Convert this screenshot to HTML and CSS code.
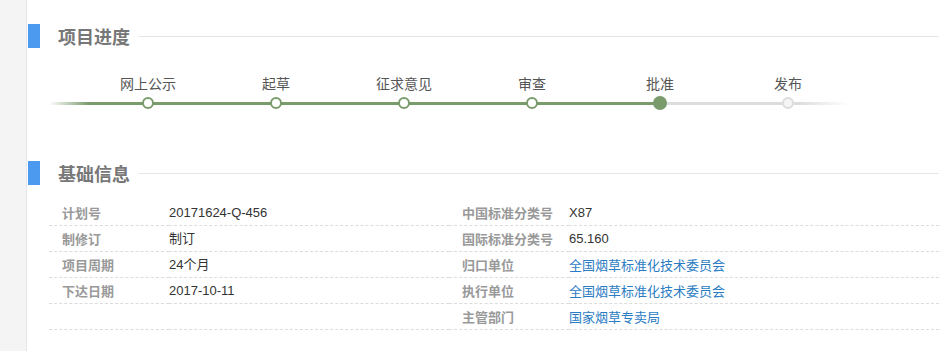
FILE: index.html
```html
<!DOCTYPE html>
<html lang="zh-CN">
  <head>
    <title>项目详情</title>
    <link rel="stylesheet" href="styles.css">
  </head>
  <body>
    <div class="side"></div>
    <div class="main">
      <div class="head">
        <span class="head-bar"></span>
        <h2 class="head-title">项目进度</h2>
        <span class="head-line"></span>
      </div>

      <div class="steps">
        <div class="step done"><span class="step-name">网上公示</span><span class="dot"></span></div>
        <div class="step done"><span class="step-name">起草</span><span class="dot"></span></div>
        <div class="step done"><span class="step-name">征求意见</span><span class="dot"></span></div>
        <div class="step done"><span class="step-name">审查</span><span class="dot"></span></div>
        <div class="step current"><span class="step-name">批准</span><span class="dot"></span></div>
        <div class="step todo"><span class="step-name">发布</span><span class="dot"></span></div>
      </div>

      <div class="head head-second">
        <span class="head-bar"></span>
        <h2 class="head-title">基础信息</h2>
        <span class="head-line"></span>
      </div>

      <div class="info">
        <div class="label">计划号</div>
        <div class="value">20171624-Q-456</div>
        <div class="label">中国标准分类号</div>
        <div class="value">X87</div>

        <div class="label">制修订</div>
        <div class="value">制订</div>
        <div class="label">国际标准分类号</div>
        <div class="value">65.160</div>

        <div class="label">项目周期</div>
        <div class="value">24个月</div>
        <div class="label">归口单位</div>
        <div class="value"><a href="#">全国烟草标准化技术委员会</a></div>

        <div class="label">下达日期</div>
        <div class="value">2017-10-11</div>
        <div class="label">执行单位</div>
        <div class="value"><a href="#">全国烟草标准化技术委员会</a></div>

        <div class="label"></div>
        <div class="value"></div>
        <div class="label">主管部门</div>
        <div class="value"><a href="#">国家烟草专卖局</a></div>
      </div>
    </div>
  </body>
</html>
```

FILE: styles.css
```css
body {
  margin: 0;
  display: flex;
  min-height: 351px;
  font-family: "Liberation Sans", "Noto Sans CJK SC", sans-serif;
  font-size: 13px;
  color: #333;
  background-color: #fff;
}
.side {
  width: 26px;
  flex-shrink: 0;
  background-color: #f4f4f4;
  border-right: 1px solid #e6e6e6;
}
.main {
  flex: 1;
  padding-top: 24px;
  padding-left: 1px;
  overflow: hidden;
}

/* section heads */
.head {
  display: flex;
  align-items: center;
  height: 24px;
}
.head-second {
  margin-top: 48px;
}
.head-bar {
  width: 12px;
  height: 24px;
  background-color: #4b9af0;
}
.head-title {
  margin: 0 0 0 18px;
  font-family: "Noto Sans CJK SC", sans-serif;
  font-size: 18px;
  font-weight: bold;
  line-height: 24px;
  color: #777;
}
.head-line {
  flex: 1;
  height: 1px;
  margin-left: 9px;
  background-color: #e5e5e5;
}

/* progress */
.steps {
  display: flex;
  width: 800px;
  height: 40px;
  margin: 25px 0 0 21px;
  padding-left: 35px;
  box-sizing: border-box;
  background-image: linear-gradient(to right, rgba(122, 155, 108, 0) 0, #7a9b6c 40px, #7a9b6c 612px, #dddddd 612px, #dddddd 750px, rgba(221, 221, 221, 0) 800px);
  background-size: 100% 3px;
  background-position: 0 29px;
  background-repeat: no-repeat;
}
.step {
  width: 128px;
  flex-shrink: 0;
  display: flex;
  flex-direction: column;
  align-items: center;
}
.step-name {
  font-family: "Noto Sans CJK SC", sans-serif;
  font-size: 14px;
  line-height: 20px;
  color: #555;
}
.dot {
  width: 12px;
  height: 12px;
  margin-top: 4px;
  box-sizing: border-box;
  border-radius: 50%;
  border: 2px solid #7a9b6c;
  background-color: #fff;
}
.step.current .dot {
  width: 14px;
  height: 14px;
  margin-top: 3px;
  background-color: #7a9b6c;
}
.step.todo .dot {
  border-color: #dddddd;
  background-color: #f5f5f5;
}

/* base info */
.info {
  display: grid;
  grid-template-columns: 120px 280px 120px 1fr;
  margin: 15px 0 0 21px;
}
.label,
.value {
  height: 25px;
  line-height: 25px;
  border-bottom: 1px dashed #dcdcdc;
  white-space: nowrap;
}
.label {
  padding-left: 13px;
  font-family: "Noto Sans CJK SC", sans-serif;
  font-weight: bold;
  color: #999;
}
.value a {
  font-family: "Noto Sans CJK SC", sans-serif;
  color: #2b7cc3;
  text-decoration: none;
}
```
